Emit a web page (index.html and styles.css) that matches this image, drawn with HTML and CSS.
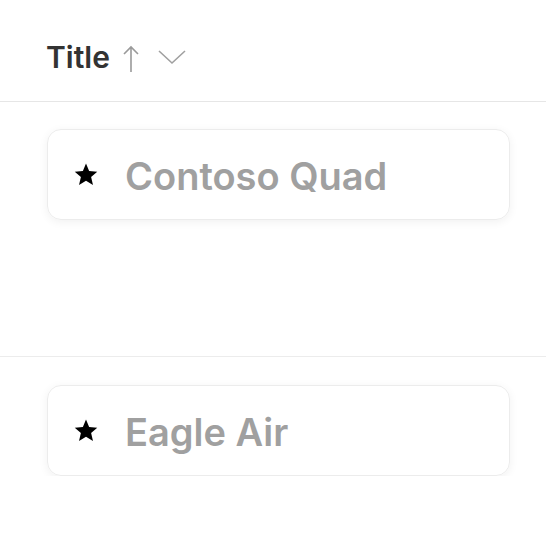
FILE: index.html
```html
<!DOCTYPE html>
<html>
<head>
<meta charset="utf-8">
<link rel="stylesheet" href="styles.css">
</head>
<body>
<div class="header">
  <span class="title">Title</span>
  <svg class="arrow" width="16" height="28" viewBox="0 0 16 28"><path d="M8 2 V27 M1 9 L8 2 L15 9" fill="none" stroke="#9a9a9a" stroke-width="1.6"/></svg>
  <svg class="chev" width="28" height="16" viewBox="0 0 28 16"><path d="M1 2 L14 14 L27 2" fill="none" stroke="#a0a0a0" stroke-width="1.6"/></svg>
</div>
<div class="row">
  <div class="card">
    <svg class="star" width="26" height="25" viewBox="0 0 24 24"><path d="M12 1.5 L15 8.6 L22.8 9.3 L16.9 14.4 L18.7 22 L12 18 L5.3 22 L7.1 14.4 L1.2 9.3 L9 8.6 Z" fill="#000"/></svg>
    <span class="name">Contoso Quad</span>
  </div>
</div>
<div class="row">
  <div class="card">
    <svg class="star" width="26" height="25" viewBox="0 0 24 24"><path d="M12 1.5 L15 8.6 L22.8 9.3 L16.9 14.4 L18.7 22 L12 18 L5.3 22 L7.1 14.4 L1.2 9.3 L9 8.6 Z" fill="#000"/></svg>
    <span class="name">Eagle Air</span>
  </div>
</div>
</body>
</html>
```
FILE: styles.css
```css
html, body {
  margin: 0;
  padding: 0;
  background: #fff;
  font-family: Inter, "Open Sans", sans-serif;
}
.header {
  height: 102px;
  box-sizing: border-box;
  padding: 39px 0 0 46px;
  display: flex;
  align-items: flex-start;
  border-bottom: 1px solid #e6e6e6;
}
.title {
  font-size: 30px;
  line-height: 36px;
  font-weight: 600;
  color: #333;
}
.arrow {
  margin: 6px 0 0 13px;
}
.chev {
  margin: 10px 0 0 19px;
}
.row {
  height: 255px;
  box-sizing: border-box;
  padding-top: 27px;
  border-bottom: 1px solid #ececec;
}
.row:last-child {
  height: auto;
  padding-top: 28px;
  border-bottom: none;
}
.card {
  margin-left: 47px;
  width: 463px;
  height: 91px;
  box-sizing: border-box;
  border: 1px solid #ececec;
  border-radius: 14px;
  box-shadow: 0 2px 10px rgba(0, 0, 0, 0.06);
  display: flex;
  align-items: center;
  padding-left: 25px;
}
.star {
  flex: none;
}
.name {
  margin-left: 26px;
  padding-top: 3px;
  font-size: 38px;
  line-height: 48px;
  font-weight: 600;
  color: #a0a0a0;
}
```
